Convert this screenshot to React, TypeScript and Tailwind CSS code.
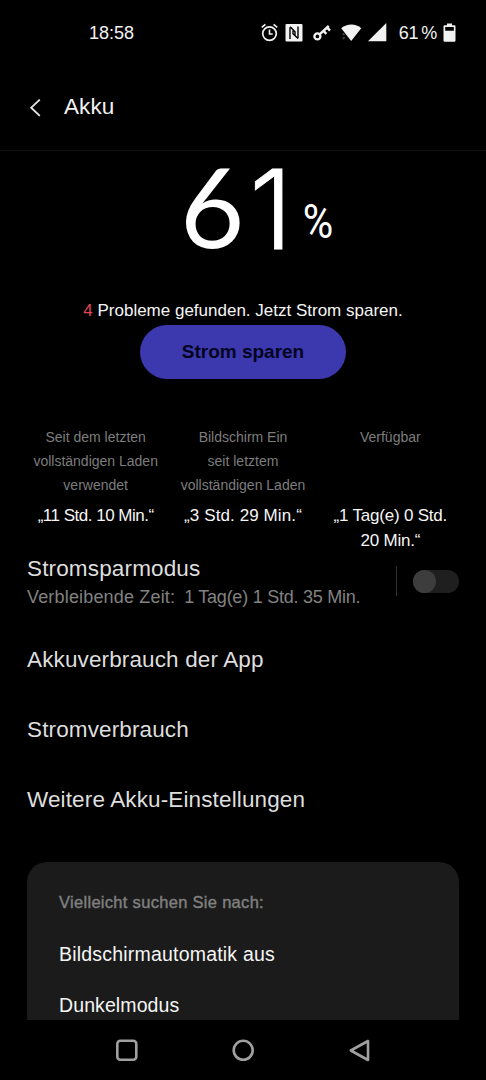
type Stat = {
  label: string[];
  value: string[];
  spacing: string;
};

const stats: Stat[] = [
  {
    label: ["Seit dem letzten", "vollständigen Laden", "verwendet"],
    value: ["„11 Std. 10 Min.“"],
    spacing: "tracking-[-0.5px]",
  },
  {
    label: ["Bildschirm Ein", "seit letztem", "vollständigen Laden"],
    value: ["„3 Std. 29 Min.“"],
    spacing: "tracking-[0.1px]",
  },
  {
    label: ["Verfügbar"],
    value: ["„1 Tag(e) 0 Std.", "20 Min.“"],
    spacing: "tracking-[-0.2px]",
  },
];

const links = ["Akkuverbrauch der App", "Stromverbrauch", "Weitere Akku-Einstellungen"];

const StatusBar = () => (
  <div className="flex h-[65px] shrink-0 items-center justify-between pl-[89px] pr-[30px] text-lg text-[#f2f2f2]">
    <span>18:58</span>

    <div className="flex items-center">
      {/* Alarm */}
      <svg width="18" height="20" viewBox="0 0 18 20" fill="none" stroke="currentColor" className="mr-[6px]">
        <circle cx="8.500" cy="10.600" r="6.8" strokeWidth="1.7" />
        <path d="M8.500 6.600V11h3.200" strokeWidth="1.6" />
        <path d="M.8 4.4 4.400 1.400M16.200 4.400 12.600 1.400" strokeWidth="1.7" />
      </svg>

      {/* NFC */}
      <svg width="18" height="18" viewBox="0 0 18 18" className="mr-[10px]">
        <rect x="0.5" y="0" width="17" height="17.500" rx="1" fill="currentColor" />
        <path d="M5 3.200V15M13 2.500v11.800" fill="none" stroke="#000" strokeWidth="1.400" />
        <path d="M5.200 2.800 10 7.800v3.400M8 6.400v3.400l5 4.700" fill="none" stroke="#000" strokeWidth="1.400" />
      </svg>

      {/* VPN key */}
      <svg width="19" height="18" viewBox="0 0 19 18" fill="none" stroke="currentColor" className="mr-[9px]">
        <circle cx="4.400" cy="12.400" r="3" strokeWidth="2.3" />
        <path d="M6.800 10.200 15.800 2M10.700 7l2.600 2.900M14.200 3.600l2.800 3.100" strokeWidth="2.500" />
      </svg>

      {/* Wi-Fi */}
      <svg width="21" height="18" viewBox="0 0 21 18" className="mr-[6px]">
        <path d="M.2 4.200C6-.6 15-.6 20.200 4.200L10.200 17z" fill="currentColor" />
        <path d="m1.200 11 1.500-2 1.500 2zM1.200 13.500l1.500 2 1.500-2z" fill="#555" />
      </svg>

      {/* Mobile signal */}
      <svg width="19" height="19" viewBox="0 0 19 19" className="mr-[12px]">
        <path d="M18.300 0v18.200H0z" fill="currentColor" />
      </svg>

      <span className="mr-[6px] tracking-[-0.3px] [word-spacing:-1.5px]">61 %</span>

      {/* Battery */}
      <svg width="13" height="20" viewBox="0 0 13 20">
        <path
          fillRule="evenodd"
          d="M4 .5h5v1.700h2.300q1.200 0 1.200 1.200V17.500q0 1.200-1.200 1.200H1.700Q.5 18.700.5 17.500V3.400q0-1.200 1.200-1.200H4zM2.200 4v3.800h8.600V4z"
          fill="currentColor"
        />
      </svg>
    </div>
  </div>
);

const Header = () => (
  <div className="flex h-[86px] shrink-0 items-center border-b border-[#131313] pl-[29px]">
    <svg width="13" height="20" viewBox="0 0 13 20" fill="none" stroke="#e8e8e8" strokeWidth="1.8">
      <path d="M10.800 1.600 2.200 9.700l8.600 8.100" />
    </svg>
    <h1 className="ml-[22px] pb-[2px] text-[22.500px] tracking-[0.1px] text-[#f2f2f2]">Akku</h1>
  </div>
);

const BatteryLevel = () => (
  <div className="flex h-[143px] shrink-0 pl-[180px] leading-none text-white">
    <span className="-mt-px w-[64px] text-center font-['Lato',sans-serif] text-[111px]">6</span>
    <span className="ml-[2px] mt-[3px] w-[50px] text-center font-['Inter',sans-serif] text-[110px] font-light [-webkit-text-stroke:0.8px_white]">
      1
    </span>
    <span className="ml-[4px] mt-[46px] w-[36px] origin-center scale-x-[0.85] text-center font-['Roboto',sans-serif] text-[49px]">
      %
    </span>
  </div>
);

const NavBar = () => (
  <div className="flex h-[60px] shrink-0 items-center justify-between pl-[115px] pr-[115px]">
    <svg width="23" height="23" viewBox="0 0 23 23" fill="none" stroke="#a0a0a0" strokeWidth="2.600">
      <rect x="2.300" y="1.800" width="19" height="19" rx="3" />
    </svg>
    <svg width="23" height="23" viewBox="0 0 23 23" fill="none" stroke="#a0a0a0" strokeWidth="2.600">
      <circle cx="11.200" cy="11.300" r="9.500" />
    </svg>
    <svg width="23" height="23" viewBox="0 0 23 23" fill="none" stroke="#a0a0a0" strokeWidth="2.600" strokeLinejoin="round">
      <path d="M20 2v19L2.800 11.500z" />
    </svg>
  </div>
);

const App = () => {
  return (
    <div className="flex h-[1080px] w-full flex-col overflow-hidden bg-black font-['Liberation_Sans',Arial,sans-serif]">
      <StatusBar />
      <Header />

      <div className="flex min-h-0 flex-1 flex-col">
        <BatteryLevel />

        {/* Power saving hint */}
        <div className="flex shrink-0 flex-col items-center">
          <p className="h-[31px] whitespace-nowrap text-[17px] leading-[34px] text-[#f5f5f5]">
            <span className="text-[#e0455a]">4</span> Probleme gefunden. Jetzt Strom sparen.
          </p>
          <button className="h-[54px] w-[206px] rounded-full bg-[#3c38ae] text-[19px] font-bold text-[#04041f]">
            Strom sparen
          </button>
        </div>

        {/* Usage since last charge */}
        <div className="mt-[46px] grid h-[129px] shrink-0 grid-cols-3 px-[22px] text-center">
          {stats.map((stat) => (
            <div key={stat.label[0]}>
              <div className="h-[78px] text-[14px] leading-6 text-[#7d7d7d]">
                {stat.label.map((line) => (
                  <p key={line} className="whitespace-nowrap">{line}</p>
                ))}
              </div>
              <div className={`text-[17px] leading-[25px] text-[#f5f5f5] ${stat.spacing}`}>
                {stat.value.map((line) => (
                  <p key={line} className="whitespace-nowrap">{line}</p>
                ))}
              </div>
            </div>
          ))}
        </div>

        {/* Power saving mode */}
        <div className="flex h-[71px] shrink-0 justify-between px-[27px]">
          <div className="whitespace-nowrap">
            <h2 className="text-[22.500px] leading-[30px] tracking-[0.15px] text-[#dedede]">Stromsparmodus</h2>
            <p className="text-[18px] leading-[27px] tracking-[0.17px] text-[#828282]">
              Verbleibende Zeit:
              <span className="ml-[9px] tracking-[-0.25px]">1 Tag(e) 1 Std. 35 Min.</span>
            </p>
          </div>
          <div className="mt-[12px] flex h-[30px] items-center gap-[16px]">
            <div className="h-[30px] w-px bg-[#333]" />
            <div className="h-[23px] w-[46px] rounded-full bg-[#1f1f1f]">
              <div className="size-[23px] rounded-full bg-[#3d3d3d]" />
            </div>
          </div>
        </div>

        {links.map((link) => (
          <div
            key={link}
            className="flex h-[70px] shrink-0 items-center px-[27px] text-[22.500px] tracking-[0.13px] text-[#dedede]"
          >
            {link}
          </div>
        ))}

        {/* Suggestions */}
        <div className="mx-[27px] mt-[27px] min-h-0 flex-1 overflow-hidden rounded-t-[20px] bg-[#1b1b1b] px-[32px] pt-[25px] text-[19.500px] text-[#f5f5f5]">
          <p className="h-[42px] text-[16.500px] leading-[30px] tracking-[0.3px] text-[#808080] [-webkit-text-stroke:0.4px_#808080]">
            Vielleicht suchen Sie nach:
          </p>
          <p className="h-[50px] leading-[50px] tracking-[0.2px]">Bildschirmautomatik aus</p>
          <p className="h-[50px] leading-[52px] tracking-[0.1px]">Dunkelmodus</p>
        </div>
      </div>

      <NavBar />
    </div>
  );
};

export default App;
